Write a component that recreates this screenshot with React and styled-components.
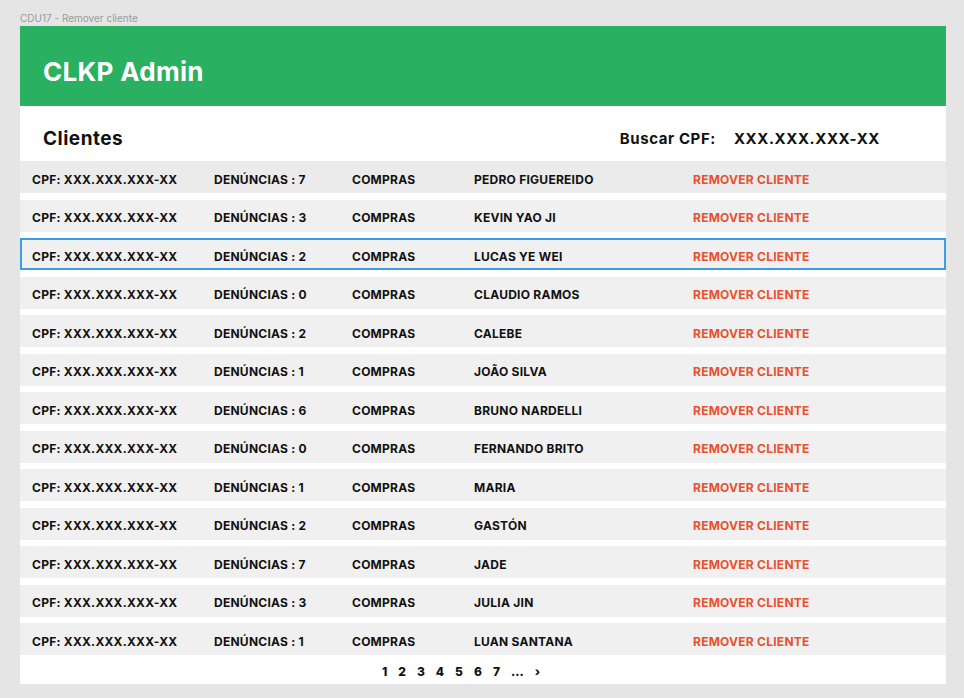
import React from "react";
import styled, { createGlobalStyle } from "styled-components";

const GlobalStyle = createGlobalStyle`
  html, body {
    margin: 0;
    padding: 0;
    background: #e5e5e5;
    font-family: "Inter", "Liberation Sans", sans-serif;
  }
`;

const Page = styled.div`
  width: 964px;
  height: 698px;
  padding: 11px 0 0 20px;
  box-sizing: border-box;
`;

const FrameLabel = styled.div`
  font-size: 10px;
  color: #9a9a9a;
  height: 15px;
  line-height: 14px;
`;

const Frame = styled.div`
  width: 926px;
  background: #ffffff;
  display: flex;
  flex-direction: column;
`;

const Header = styled.div`
  height: 80px;
  box-sizing: border-box;
  background: #29b061;
  display: flex;
  align-items: center;
  padding: 10px 0 0 23px;
`;

const Title = styled.h1`
  margin: 0;
  color: #ffffff;
  font-size: 26px;
  font-weight: 700;
  letter-spacing: 0.3px;
`;

const Toolbar = styled.div`
  height: 55px;
  box-sizing: border-box;
  display: flex;
  align-items: center;
  padding: 10px 66px 0 23px;
`;

const SectionTitle = styled.h2`
  margin: 0;
  font-size: 19px;
  font-weight: 700;
  color: #111;
  letter-spacing: 0.5px;
  flex: 1;
`;

const SearchLabel = styled.span`
  font-size: 15px;
  font-weight: 700;
  color: #111;
  letter-spacing: 0.6px;
  margin-right: 18px;
`;

const SearchValue = styled.span`
  font-size: 15px;
  font-weight: 700;
  color: #111;
  letter-spacing: 0.6px;
`;

const List = styled.div`
  display: flex;
  flex-direction: column;
  gap: 6.5px;
`;

const Row = styled.div`
  height: 32px;
  box-sizing: border-box;
  display: grid;
  grid-template-columns: 182px 138px 122px 219px 1fr;
  align-items: center;
  padding-left: ${(p) => (p.$selected ? 10 : 12)}px;
  padding-top: 4px;
  background: ${(p) => (p.$first ? "#ebebeb" : "#f0f0f0")};
  border: ${(p) => (p.$selected ? "2px solid #3a9fe2" : "none")};
  font-size: 12px;
  font-weight: 700;
  letter-spacing: 0.25px;
  color: #111;
`;

const Cell = styled.span`
  white-space: nowrap;
`;

const RemoveLink = styled.span`
  color: #e9502d;
  white-space: nowrap;
  cursor: pointer;
`;

const Pagination = styled.div`
  height: 29px;
  box-sizing: border-box;
  display: flex;
  align-items: center;
  gap: 11px;
  padding: 3px 0 0 362px;
  font-size: 12px;
  font-weight: 800;
  color: #111;
`;

const clients = [
  { d: 7, name: "PEDRO FIGUEREIDO" },
  { d: 3, name: "KEVIN YAO JI" },
  { d: 2, name: "LUCAS YE WEI", selected: true },
  { d: 0, name: "CLAUDIO RAMOS" },
  { d: 2, name: "CALEBE" },
  { d: 1, name: "JOÃO SILVA" },
  { d: 6, name: "BRUNO NARDELLI" },
  { d: 0, name: "FERNANDO BRITO" },
  { d: 1, name: "MARIA" },
  { d: 2, name: "GASTÓN" },
  { d: 7, name: "JADE" },
  { d: 3, name: "JULIA JIN" },
  { d: 1, name: "LUAN SANTANA" },
];

export default function App() {
  return (
    <>
      <GlobalStyle />
      <Page>
        <FrameLabel>CDU17 - Remover cliente</FrameLabel>
        <Frame>
          <Header>
            <Title>CLKP Admin</Title>
          </Header>
          <Toolbar>
            <SectionTitle>Clientes</SectionTitle>
            <SearchLabel>Buscar CPF:</SearchLabel>
            <SearchValue>XXX.XXX.XXX-XX</SearchValue>
          </Toolbar>
          <List>
            {clients.map((c, i) => (
              <Row key={i} $first={i === 0} $selected={c.selected}>
                <Cell>CPF: XXX.XXX.XXX-XX</Cell>
                <Cell>DENÚNCIAS : {c.d}</Cell>
                <Cell>COMPRAS</Cell>
                <Cell>{c.name}</Cell>
                <RemoveLink>REMOVER CLIENTE</RemoveLink>
              </Row>
            ))}
          </List>
          <Pagination>
            {["1", "2", "3", "4", "5", "6", "7", "...", "›"].map((p) => (
              <span key={p}>{p}</span>
            ))}
          </Pagination>
        </Frame>
      </Page>
    </>
  );
}
